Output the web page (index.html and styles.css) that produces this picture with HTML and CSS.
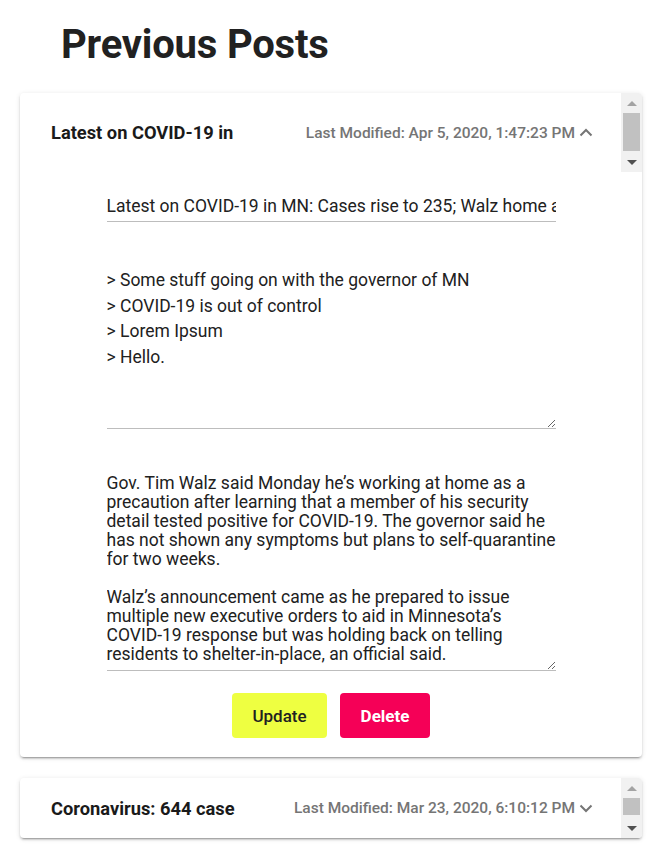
FILE: index.html
```html
<!DOCTYPE html>
<html>
<head>
<meta charset="utf-8">
<link rel="stylesheet" href="styles.css">
</head>
<body>
<div class="page">
  <h1 class="page-title">Previous Posts</h1>

  <div class="panel panel-open">
    <div class="panel-header header-tall">
      <div class="header-main">
        <span class="header-title">Latest on COVID-19 in</span>
        <span class="header-date">Last Modified: Apr 5, 2020, 1:47:23 PM</span>
        <svg class="chevron" width="14" height="9" viewBox="0 0 14 9"><polyline points="1.5,7.5 7,2 12.5,7.5" fill="none" stroke="#757575" stroke-width="2"/></svg>
      </div>
      <div class="fake-scroll">
        <span class="arrow arrow-up disabled"></span>
        <span class="thumb thumb-tall"></span>
        <span class="track-rest"></span>
        <span class="arrow arrow-down"></span>
      </div>
    </div>

    <div class="panel-body">
      <input class="field field-input" type="text" value="Latest on COVID-19 in MN: Cases rise to 235; Walz home as a precaution">
      <textarea class="field field-summary">&gt; Some stuff going on with the governor of MN
&gt; COVID-19 is out of control
&gt; Lorem Ipsum
&gt; Hello.</textarea>
      <textarea class="field field-body">Gov. Tim Walz said Monday he’s working at home as a precaution after learning that a member of his security detail tested positive for COVID-19. The governor said he has not shown any symptoms but plans to self-quarantine for two weeks.

Walz’s announcement came as he prepared to issue multiple new executive orders to aid in Minnesota’s COVID-19 response but was holding back on telling residents to shelter-in-place, an official said.</textarea>
      <div class="actions">
        <button class="btn btn-update">Update</button>
        <button class="btn btn-delete">Delete</button>
      </div>
    </div>
  </div>

  <div class="panel">
    <div class="panel-header header-short">
      <div class="header-main">
        <span class="header-title">Coronavirus: 644 case</span>
        <span class="header-date">Last Modified: Mar 23, 2020, 6:10:12 PM</span>
        <svg class="chevron" width="14" height="9" viewBox="0 0 14 9"><polyline points="1.5,1.5 7,7 12.5,1.5" fill="none" stroke="#757575" stroke-width="2"/></svg>
      </div>
      <div class="fake-scroll">
        <span class="arrow arrow-up disabled"></span>
        <span class="thumb thumb-short"></span>
        <span class="track-rest"></span>
        <span class="arrow arrow-down"></span>
      </div>
    </div>
  </div>
</div>
</body>
</html>
```

FILE: styles.css
```css
html, body {
  margin: 0;
  padding: 0;
  background: #ffffff;
}

body {
  font-family: Roboto, "Liberation Sans", Arial, sans-serif;
  color: #212121;
}

.page {
  padding: 0 20px;
}

.page-title {
  margin: 21px 0 25px 41px;
  font-size: 40px;
  line-height: 47px;
  font-weight: 700;
  color: #212121;
  letter-spacing: -0.2px;
}

.panel {
  background: #ffffff;
  border-radius: 4px;
  box-shadow: 0 3px 1px -2px rgba(0,0,0,.2), 0 2px 2px 0 rgba(0,0,0,.14), 0 1px 5px 0 rgba(0,0,0,.12);
  margin-bottom: 21px;
  overflow: hidden;
}

.panel-header {
  display: flex;
}

.header-tall { height: 79px; }
.header-short { height: 60px; }

.header-main {
  flex: 1;
  display: flex;
  align-items: center;
  padding-left: 31px;
  padding-right: 28px;
  min-width: 0;
}

.header-title {
  width: 185px;
  flex: none;
  overflow: hidden;
  white-space: nowrap;
  font-size: 18.3px;
  font-weight: 700;
  color: #1a1a1a;
}

.header-date {
  margin-left: auto;
  font-size: 15.5px;
  font-weight: 500;
  color: #757575;
  white-space: nowrap;
}

.chevron {
  margin-left: 4px;
  flex: none;
}

.fake-scroll {
  width: 21px;
  flex: none;
  background: #f1f1f1;
  display: flex;
  flex-direction: column;
  align-items: center;
}

.arrow {
  height: 20px;
  width: 17px;
  display: flex;
  align-items: center;
  justify-content: center;
  flex: none;
}

.arrow::before {
  content: "";
  width: 0;
  height: 0;
  border-left: 5px solid transparent;
  border-right: 5px solid transparent;
}

.arrow-up::before {
  border-bottom: 5px solid #505050;
}

.arrow-up.disabled::before {
  border-bottom-color: #a3a3a3;
}

.arrow-down::before {
  border-top: 5px solid #505050;
}

.thumb {
  width: 17px;
  background: #c1c1c1;
  flex: none;
}

.thumb-tall { height: 38px; }
.thumb-short { height: 17px; }

.track-rest { flex: 1; }

.panel-body {
  width: 449px;
  margin: 0 auto;
  padding: 24px 0 19px;
  display: flex;
  flex-direction: column;
}

.field {
  font-family: Roboto, "Liberation Sans", Arial, sans-serif;
  font-size: 17.5px;
  color: #212121;
  border: none;
  border-bottom: 1px solid #bdbdbd;
  outline: none;
  background: transparent;
  margin: 0;
  padding: 0 0 6px;
  width: 100%;
  box-sizing: border-box;
}

.field-input {
  height: 26px;
  line-height: 19px;
}

textarea.field {
  resize: vertical;
  overflow: hidden;
  margin-top: 45px;
  display: block;
}

.field-summary {
  line-height: 25.5px;
  height: 162px;
  padding-top: 1px;
}

.field-body {
  line-height: 19px;
  height: 197px;
}

.actions {
  display: flex;
  justify-content: center;
  gap: 13px;
  margin-top: 22px;
}

.btn {
  font-family: Roboto, "Liberation Sans", Arial, sans-serif;
  font-size: 17px;
  height: 45px;
  border: none;
  border-radius: 4px;
  padding: 0;
}

.btn-update {
  background: #eeff41;
  color: #212121;
  font-weight: 500;
  width: 95px;
}

.btn-delete {
  background: #f50057;
  color: #ffffff;
  font-weight: 700;
  width: 90px;
}
```
